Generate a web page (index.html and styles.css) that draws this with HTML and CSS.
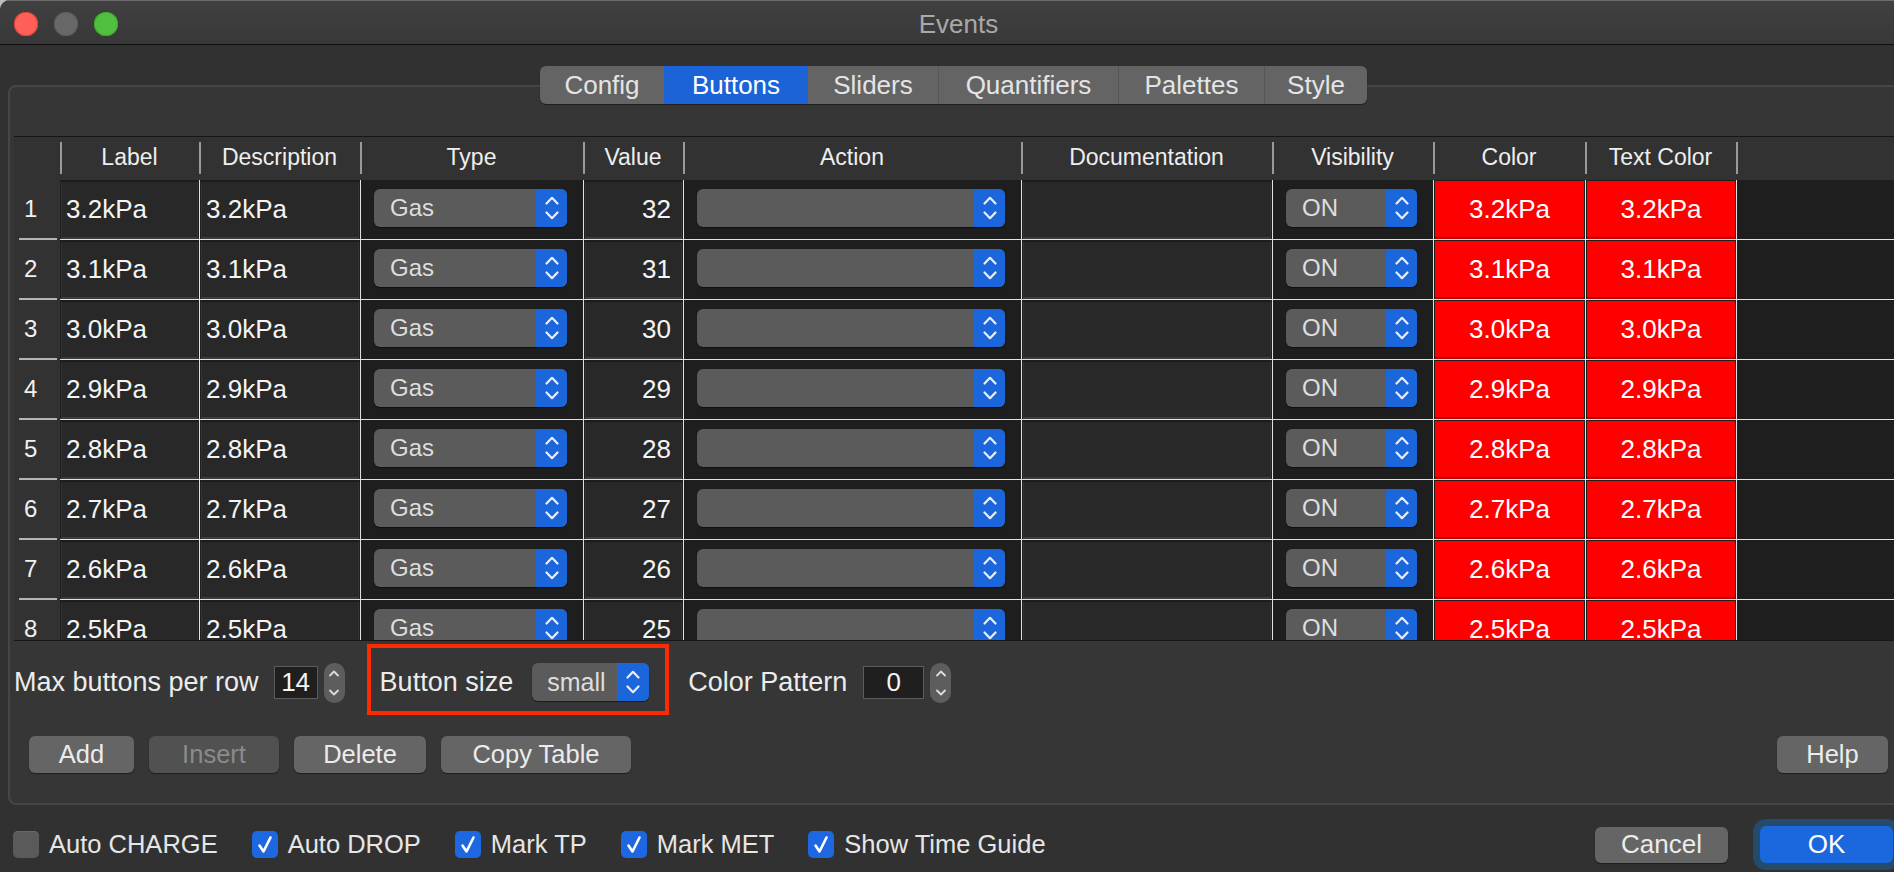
FILE: index.html
```html
<!DOCTYPE html>
<html>
<head>
<meta charset="utf-8">
<title>Events</title>
<link rel="stylesheet" href="styles.css">
</head>
<body>
<svg class="defs" width="0" height="0">
  <symbol id="chev" viewBox="0 0 16 24">
    <path d="M2.5 7.5 L8 1.8 L13.5 7.5 M2.5 16.5 L8 22.2 L13.5 16.5" fill="none" stroke="#e9eefb" stroke-width="2.2" stroke-linecap="round" stroke-linejoin="round"/>
  </symbol>
  <symbol id="step" viewBox="0 0 12 28">
    <path d="M2 6.5 L6 2.5 L10 6.5 M2 21.5 L6 25.5 L10 21.5" fill="none" stroke="#dcdcdc" stroke-width="1.8" stroke-linecap="round" stroke-linejoin="round"/>
  </symbol>
  <symbol id="check" viewBox="0 0 26 26">
    <path d="M7.5 13.5 L11.5 19.5 L18.5 5.5" fill="none" stroke="#ffffff" stroke-width="2.6" stroke-linecap="round" stroke-linejoin="round"/>
  </symbol>
</svg>
<div class="window">
  <div class="titlebar">
    <div class="lights">
      <span class="light l-close"></span>
      <span class="light l-min"></span>
      <span class="light l-zoom"></span>
    </div>
    <div class="title">Events</div>
    <div></div>
  </div>
  <div class="content">
    <div class="groupbox">
      <div class="tabs">
        <div class="tab w-config">Config</div>
        <div class="tab w-buttons active">Buttons</div>
        <div class="tab w-sliders">Sliders</div>
        <div class="tab w-quant">Quantifiers</div>
        <div class="tab w-pal">Palettes</div>
        <div class="tab w-style">Style</div>
      </div>

      <div class="table">
        <div class="thead">
          <div class="th first"></div>
          <div class="th">Label</div>
          <div class="th">Description</div>
          <div class="th">Type</div>
          <div class="th">Value</div>
          <div class="th">Action</div>
          <div class="th">Documentation</div>
          <div class="th">Visibility</div>
          <div class="th">Color</div>
          <div class="th">Text Color</div>
          <div class="th"></div>
        </div>
        <div class="tbody">
          <div class="row">
            <div class="rh">1</div>
            <div class="td nol"><div class="field">3.2kPa</div></div>
            <div class="td"><div class="field">3.2kPa</div></div>
            <div class="td"><div class="popup"><span class="ptext">Gas</span><span class="pbtn"><svg><use href="#chev"/></svg></span></div></div>
            <div class="td"><div class="field num">32</div></div>
            <div class="td"><div class="popup"><span class="ptext"></span><span class="pbtn"><svg><use href="#chev"/></svg></span></div></div>
            <div class="td"><div class="field"></div></div>
            <div class="td"><div class="popup"><span class="ptext">ON</span><span class="pbtn"><svg><use href="#chev"/></svg></span></div></div>
            <div class="td"><div class="swatch">3.2kPa</div></div>
            <div class="td"><div class="swatch">3.2kPa</div></div>
            <div class="td"></div>
          </div>
          <div class="row">
            <div class="rh">2</div>
            <div class="td nol"><div class="field">3.1kPa</div></div>
            <div class="td"><div class="field">3.1kPa</div></div>
            <div class="td"><div class="popup"><span class="ptext">Gas</span><span class="pbtn"><svg><use href="#chev"/></svg></span></div></div>
            <div class="td"><div class="field num">31</div></div>
            <div class="td"><div class="popup"><span class="ptext"></span><span class="pbtn"><svg><use href="#chev"/></svg></span></div></div>
            <div class="td"><div class="field"></div></div>
            <div class="td"><div class="popup"><span class="ptext">ON</span><span class="pbtn"><svg><use href="#chev"/></svg></span></div></div>
            <div class="td"><div class="swatch">3.1kPa</div></div>
            <div class="td"><div class="swatch">3.1kPa</div></div>
            <div class="td"></div>
          </div>
          <div class="row">
            <div class="rh">3</div>
            <div class="td nol"><div class="field">3.0kPa</div></div>
            <div class="td"><div class="field">3.0kPa</div></div>
            <div class="td"><div class="popup"><span class="ptext">Gas</span><span class="pbtn"><svg><use href="#chev"/></svg></span></div></div>
            <div class="td"><div class="field num">30</div></div>
            <div class="td"><div class="popup"><span class="ptext"></span><span class="pbtn"><svg><use href="#chev"/></svg></span></div></div>
            <div class="td"><div class="field"></div></div>
            <div class="td"><div class="popup"><span class="ptext">ON</span><span class="pbtn"><svg><use href="#chev"/></svg></span></div></div>
            <div class="td"><div class="swatch">3.0kPa</div></div>
            <div class="td"><div class="swatch">3.0kPa</div></div>
            <div class="td"></div>
          </div>
          <div class="row">
            <div class="rh">4</div>
            <div class="td nol"><div class="field">2.9kPa</div></div>
            <div class="td"><div class="field">2.9kPa</div></div>
            <div class="td"><div class="popup"><span class="ptext">Gas</span><span class="pbtn"><svg><use href="#chev"/></svg></span></div></div>
            <div class="td"><div class="field num">29</div></div>
            <div class="td"><div class="popup"><span class="ptext"></span><span class="pbtn"><svg><use href="#chev"/></svg></span></div></div>
            <div class="td"><div class="field"></div></div>
            <div class="td"><div class="popup"><span class="ptext">ON</span><span class="pbtn"><svg><use href="#chev"/></svg></span></div></div>
            <div class="td"><div class="swatch">2.9kPa</div></div>
            <div class="td"><div class="swatch">2.9kPa</div></div>
            <div class="td"></div>
          </div>
          <div class="row">
            <div class="rh">5</div>
            <div class="td nol"><div class="field">2.8kPa</div></div>
            <div class="td"><div class="field">2.8kPa</div></div>
            <div class="td"><div class="popup"><span class="ptext">Gas</span><span class="pbtn"><svg><use href="#chev"/></svg></span></div></div>
            <div class="td"><div class="field num">28</div></div>
            <div class="td"><div class="popup"><span class="ptext"></span><span class="pbtn"><svg><use href="#chev"/></svg></span></div></div>
            <div class="td"><div class="field"></div></div>
            <div class="td"><div class="popup"><span class="ptext">ON</span><span class="pbtn"><svg><use href="#chev"/></svg></span></div></div>
            <div class="td"><div class="swatch">2.8kPa</div></div>
            <div class="td"><div class="swatch">2.8kPa</div></div>
            <div class="td"></div>
          </div>
          <div class="row">
            <div class="rh">6</div>
            <div class="td nol"><div class="field">2.7kPa</div></div>
            <div class="td"><div class="field">2.7kPa</div></div>
            <div class="td"><div class="popup"><span class="ptext">Gas</span><span class="pbtn"><svg><use href="#chev"/></svg></span></div></div>
            <div class="td"><div class="field num">27</div></div>
            <div class="td"><div class="popup"><span class="ptext"></span><span class="pbtn"><svg><use href="#chev"/></svg></span></div></div>
            <div class="td"><div class="field"></div></div>
            <div class="td"><div class="popup"><span class="ptext">ON</span><span class="pbtn"><svg><use href="#chev"/></svg></span></div></div>
            <div class="td"><div class="swatch">2.7kPa</div></div>
            <div class="td"><div class="swatch">2.7kPa</div></div>
            <div class="td"></div>
          </div>
          <div class="row">
            <div class="rh">7</div>
            <div class="td nol"><div class="field">2.6kPa</div></div>
            <div class="td"><div class="field">2.6kPa</div></div>
            <div class="td"><div class="popup"><span class="ptext">Gas</span><span class="pbtn"><svg><use href="#chev"/></svg></span></div></div>
            <div class="td"><div class="field num">26</div></div>
            <div class="td"><div class="popup"><span class="ptext"></span><span class="pbtn"><svg><use href="#chev"/></svg></span></div></div>
            <div class="td"><div class="field"></div></div>
            <div class="td"><div class="popup"><span class="ptext">ON</span><span class="pbtn"><svg><use href="#chev"/></svg></span></div></div>
            <div class="td"><div class="swatch">2.6kPa</div></div>
            <div class="td"><div class="swatch">2.6kPa</div></div>
            <div class="td"></div>
          </div>
          <div class="row">
            <div class="rh">8</div>
            <div class="td nol"><div class="field">2.5kPa</div></div>
            <div class="td"><div class="field">2.5kPa</div></div>
            <div class="td"><div class="popup"><span class="ptext">Gas</span><span class="pbtn"><svg><use href="#chev"/></svg></span></div></div>
            <div class="td"><div class="field num">25</div></div>
            <div class="td"><div class="popup"><span class="ptext"></span><span class="pbtn"><svg><use href="#chev"/></svg></span></div></div>
            <div class="td"><div class="field"></div></div>
            <div class="td"><div class="popup"><span class="ptext">ON</span><span class="pbtn"><svg><use href="#chev"/></svg></span></div></div>
            <div class="td"><div class="swatch">2.5kPa</div></div>
            <div class="td"><div class="swatch">2.5kPa</div></div>
            <div class="td"></div>
          </div>
        </div>
      </div>

      <div class="controls">
        <span class="lbl">Max buttons per row</span>
        <span class="numfield w44">14</span>
        <span class="stepper"><svg><use href="#step"/></svg></span>
        <div class="highlight">
          <span class="lbl">Button size</span>
          <div class="popup small"><span class="ptext">small</span><span class="pbtn"><svg><use href="#chev"/></svg></span></div>
        </div>
        <span class="lbl cp">Color Pattern</span>
        <span class="numfield w61">0</span>
        <span class="stepper"><svg><use href="#step"/></svg></span>
      </div>

      <div class="actions">
        <button class="btn w-add">Add</button>
        <button class="btn w-insert disabled">Insert</button>
        <button class="btn w-delete">Delete</button>
        <button class="btn w-copy">Copy Table</button>
        <button class="btn w-help">Help</button>
      </div>
    </div>

    <div class="footer">
      <div class="checks">
        <label class="chk"><span class="box off"></span><span>Auto CHARGE</span></label>
        <label class="chk"><span class="box on"><svg><use href="#check"/></svg></span><span>Auto DROP</span></label>
        <label class="chk"><span class="box on"><svg><use href="#check"/></svg></span><span>Mark TP</span></label>
        <label class="chk"><span class="box on"><svg><use href="#check"/></svg></span><span>Mark MET</span></label>
        <label class="chk"><span class="box on"><svg><use href="#check"/></svg></span><span>Show Time Guide</span></label>
      </div>
      <div class="dlg">
        <button class="btn dlgbtn">Cancel</button>
        <button class="btn dlgbtn ok">OK</button>
      </div>
    </div>
  </div>
</div>
</body>
</html>
```

FILE: styles.css
```css
* { box-sizing: border-box; }
html, body { margin: 0; padding: 0; }
body {
  width: 1894px;
  height: 872px;
  overflow: hidden;
  background: #bdbdbd;
  font-family: "Liberation Sans", Arial, sans-serif;
  color: #ececec;
}
.defs { position: absolute; width: 0; height: 0; }

.window {
  width: 1917px;
  height: 872px;
  background: #313131;
  border-radius: 10px 10px 0 0;
  overflow: hidden;
  display: flex;
  flex-direction: column;
}

/* title bar */
.titlebar {
  height: 45px;
  padding-top: 3px;
  display: grid;
  grid-template-columns: 1fr auto 1fr;
  align-items: center;
  background: linear-gradient(#404040, #383838);
  border-top: 1px solid #6c6c6c;
  border-bottom: 1px solid #111111;
  flex: none;
}
.lights { display: flex; gap: 16px; padding-left: 14px; }
.light { width: 24px; height: 24px; border-radius: 50%; display: block; flex: none; }
.l-close { background: #fe5f57; box-shadow: inset 0 0 0 1px #e0443e; }
.l-min { background: #686868; box-shadow: inset 0 0 0 1px #5c5c5c; }
.l-zoom { background: #50c13f; box-shadow: inset 0 0 0 1px #3fa52f; }
.title { font-size: 26px; color: #a9a9a9; }

.content { flex: 1; display: flex; flex-direction: column; }

/* group box */
.groupbox {
  margin: 40px 8px 0;
  border: 2px solid #464646;
  border-radius: 8px;
  background: #363636;
  padding-bottom: 30px;
  display: flex;
  flex-direction: column;
}

/* segmented tabs */
.tabs {
  align-self: center;
  margin-top: -21px;
  margin-right: 10px;
  height: 38px;
  display: flex;
  border-radius: 6px;
  overflow: hidden;
  background: #646464;
  box-shadow: 0 1px 1px rgba(0,0,0,0.45);
}
.tab {
  display: flex;
  align-items: center;
  justify-content: center;
  font-size: 26px;
  color: #e4e4e4;
  border-left: 1px solid #575757;
}
.tab:first-child { border-left: none; }
.tab.active { background: #1b63d7; color: #ffffff; border-left: none; }
.tab.active + .tab { border-left: none; }
.w-config { width: 124px; }
.w-buttons { width: 144px; }
.w-sliders { width: 130px; }
.w-quant { width: 180px; }
.w-pal { width: 146px; }
.w-style { width: 103px; }

/* table */
.table {
  margin: 32px 0 0 4px;
  border-top: 1px solid #161616;
  border-bottom: 1px solid #161616;
  background: #1e1e1e;
}
.thead, .row {
  display: grid;
  grid-template-columns: 46px 139px 161px 223px 100px 338px 251px 161px 152px 151px 1fr;
}
.thead { height: 43px; background: #323232; }
.th {
  display: flex;
  align-items: center;
  justify-content: center;
  font-size: 23px;
  color: #eeeeee;
  padding-bottom: 2px;
  background: linear-gradient(#9a9a9a, #9a9a9a) no-repeat left 0 top 5px / 2px 32px;
}
.th.first { background: none; }

.tbody { height: 460px; overflow: hidden; }
.row { height: 60px; }
.rh {
  background: #323232 linear-gradient(#b4b4b4, #b4b4b4) no-repeat left 5px bottom 0 / 38px 2px;
  font-size: 24px;
  color: #f0f0f0;
  display: flex;
  align-items: center;
  padding-left: 10px;
  padding-bottom: 3px;
}
.td {
  border-left: 1px solid #e2e2e2;
  border-bottom: 1px solid #e2e2e2;
  display: flex;
  align-items: center;
  min-width: 0;
}
.td.nol { border-left: none; }

.field {
  align-self: stretch;
  flex: 1;
  margin: 1px 1px 0 1px;
  background: #282828;
  border-top: 1px solid #1a1a1a;
  border-bottom: 2px solid #3c3c3c;
  box-shadow: inset 1px 0 0 #333, inset -1px 0 0 #333;
  font-size: 26px;
  color: #f4f4f4;
  display: flex;
  align-items: center;
  padding-left: 5px;
  white-space: nowrap;
}
.field.num { justify-content: flex-end; padding-right: 11px; }

.popup {
  flex: 1;
  height: 38px;
  margin: 0 16px 4px 13px;
  display: flex;
  border-radius: 6px;
  overflow: hidden;
  background: #5b5b5b;
  box-shadow: 0 1px 1px rgba(0,0,0,0.5);
}
.ptext {
  flex: 1;
  display: flex;
  align-items: center;
  padding-left: 16px;
  font-size: 24px;
  color: #dedede;
}
.pbtn {
  flex: none;
  width: 31px;
  background: #1c66dc;
  display: flex;
  align-items: center;
  justify-content: center;
}
.pbtn svg { width: 16px; height: 24px; display: block; }

.swatch {
  flex: 1;
  align-self: stretch;
  margin: 1px 1px 0 1px;
  background: #fe0000;
  border-bottom: 2px solid #b80000;
  display: flex;
  align-items: center;
  justify-content: center;
  font-size: 26px;
  color: #ffffff;
}

/* controls */
.controls {
  margin-top: 3px;
  height: 71px;
  padding-left: 4px;
  display: flex;
  align-items: center;
}
.lbl { font-size: 27px; color: #ececec; white-space: nowrap; }
.controls > .lbl, .controls > .numfield, .controls > .stepper { margin-top: 6px; }
.numfield {
  height: 33px;
  margin-left: 15px;
  background: #1f1f1f;
  border: 1px solid #5c5c5c;
  font-size: 26px;
  color: #f4f4f4;
  display: flex;
  align-items: center;
  justify-content: center;
}
.w44 { width: 44px; }
.w61 { width: 61px; margin-left: 16px; }
.stepper {
  width: 21px;
  height: 40px;
  margin-left: 6px;
  border-radius: 10px;
  background: #5d5d5d;
  display: flex;
  align-items: center;
  justify-content: center;
}
.stepper svg { width: 12px; height: 28px; display: block; }
.highlight {
  margin-left: 22px;
  align-self: stretch;
  border: 4px solid #fe2a00;
  padding: 15px 16px 10px 9px;
  display: flex;
  align-items: center;
}
.popup.small {
  flex: none;
  width: 117px;
  margin: 0 0 0 19px;
}
.popup.small .ptext { padding-left: 15px; font-size: 25px; }
.popup.small .pbtn { width: 32px; }
.lbl.cp { margin-left: 19px; }

/* action buttons */
.actions {
  margin-top: 21px;
  padding: 0 19px;
  display: flex;
  gap: 15px;
}
.btn {
  height: 37px;
  border: none;
  border-radius: 6px;
  background: #656565;
  color: #ececec;
  font-family: "Liberation Sans", Arial, sans-serif;
  font-size: 25.5px;
  padding: 0;
  box-shadow: 0 1px 1px rgba(0,0,0,0.45);
  display: flex;
  align-items: center;
  justify-content: center;
}
.btn.disabled { background: #515151; color: #8b8b8b; }
.w-add { width: 105px; }
.w-insert { width: 130px; }
.w-delete { width: 132px; }
.w-copy { width: 190px; }
.w-help { width: 111px; margin-left: auto; }

/* footer */
.footer {
  margin-top: 14px;
  height: 51px;
  padding: 0 24px 0 13px;
  display: flex;
  align-items: center;
}
.checks { display: flex; align-items: center; gap: 34px; }
.chk { display: flex; align-items: center; gap: 10px; font-size: 25.5px; color: #e6e6e6; }
.box {
  width: 26px;
  height: 27px;
  border-radius: 5px;
  display: flex;
  align-items: center;
  justify-content: center;
}
.box.off { background: #5a5a5a; box-shadow: inset 0 1px 0 #666; }
.box.on { background: #1d68e0; }
.box svg { width: 26px; height: 26px; display: block; }
.dlg { margin-left: auto; display: flex; align-items: center; gap: 32px; }
.dlgbtn { width: 133px; height: 36px; font-size: 26px; }
.dlgbtn.ok {
  height: 37px;
  background: #1b67dd;
  color: #ffffff;
  box-shadow: 0 0 0 7px #244a6c;
}
```
